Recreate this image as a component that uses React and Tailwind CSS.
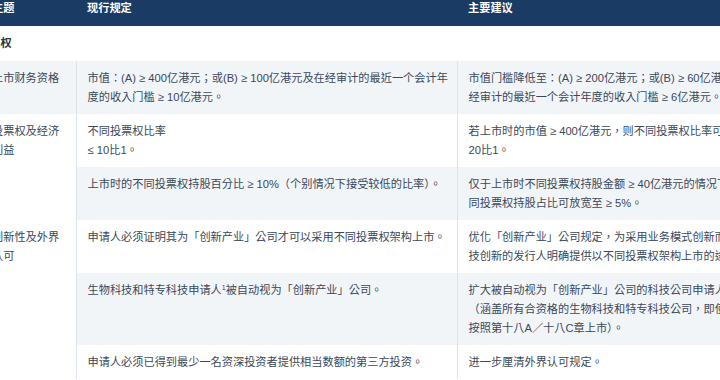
const rows = [
  {
    topic: "上市财务资格",
    span: 1,
    current: ["市值：(A) ≥ 400亿港元；或(B) ≥ 100亿港元及在经审计的最近一个会计年度的收入门槛 ≥ 10亿港元。"],
    proposal: [
      "市值门槛降低至：(A) ≥ 200亿港元；或(B) ≥ 60亿港元及在",
      "经审计的最近一个会计年度的收入门槛 ≥ 6亿港元。",
    ],
  },
  {
    topic: "投票权及经济利益",
    span: 2,
    current: ["不同投票权比率", "≤ 10比1。"],
    proposal: ["若上市时的市值 ≥ 400亿港元，则不同投票权比率可放宽至", "20比1。"],
  },
  {
    current: ["上市时的不同投票权持股百分比 ≥ 10%（个别情况下接受较低的比率）。"],
    proposal: ["仅于上市时不同投票权持股金额 ≥ 40亿港元的情况下，不", "同投票权持股占比可放宽至 ≥ 5%。"],
  },
  {
    topic: "创新性及外界认可",
    span: 3,
    current: ["申请人必须证明其为「创新产业」公司才可以采用不同投票权架构上市。"],
    proposal: ["优化「创新产业」公司规定，为采用业务模式创新而非科", "技创新的发行人明确提供以不同投票权架构上市的途径。"],
  },
  {
    current: null,
    note: true,
    proposal: [
      "扩大被自动视为「创新产业」公司的科技公司申请人范围",
      "（涵盖所有合资格的生物科技和特专科技公司，即使并非",
      "按照第十八A／十八C章上市）。",
    ],
  },
  {
    current: ["申请人必须已得到最少一名资深投资者提供相当数额的第三方投资。"],
    proposal: ["进一步厘清外界认可规定。"],
  },
];

function Lines({ lines }) {
  return lines.map((line, i) => (
    <span key={i}>
      {i > 0 ? <br /> : null}
      {line}
    </span>
  ));
}

export default function App() {
  return (
    <div className="w-[720px] h-[380px] overflow-hidden bg-white font-['Liberation_Sans','Noto_Sans_CJK_TC',sans-serif] text-[11.2px] leading-[19px] text-[#3b4858]">
      <table className="-ml-[19px] -mt-[9px] w-[860px] table-fixed border-collapse">
        <colgroup>
          <col className="w-[95px]" />
          <col className="w-[381px]" />
          <col className="w-[384px]" />
        </colgroup>
        <thead>
          <tr className="bg-[#1a3c64] text-white text-left font-bold">
            <th className="px-[11px] py-2 font-bold">主题</th>
            <th className="px-[11px] py-2 font-bold">现行规定</th>
            <th className="px-[11px] py-2 font-bold">主要建议</th>
          </tr>
        </thead>
        <tbody>
          <tr className="bg-white">
            <td colSpan={3} className="py-2 pl-0 font-bold text-[#2a3644]">
              <span className="-ml-[3px]">投票权</span>
            </td>
          </tr>
          {rows.map((row, idx) => (
            <tr key={idx} className={idx % 2 === 0 ? "bg-[#f2f5f8]" : "bg-white"}>
              {row.topic ? (
                <td rowSpan={row.span} className="align-top pl-[11px] pr-[8px] py-[7.5px] border-r border-[#dde3ea]">
                  {row.topic}
                </td>
              ) : null}
              <td className="align-top pl-[11px] pr-[6px] py-[7.5px]">
                {row.note ? (
                  <>
                    生物科技和特专科技申请人<sup className="text-[7px] align-baseline relative -top-[4px]">1</sup>被自动视为「创新产业」公司。
                  </>
                ) : (
                  <Lines lines={row.current} />
                )}
              </td>
              <td className="align-top px-[11px] py-[7.5px] border-l border-[#dde3ea] whitespace-nowrap">
                <Lines lines={row.proposal} />
              </td>
            </tr>
          ))}
        </tbody>
      </table>
    </div>
  );
}
